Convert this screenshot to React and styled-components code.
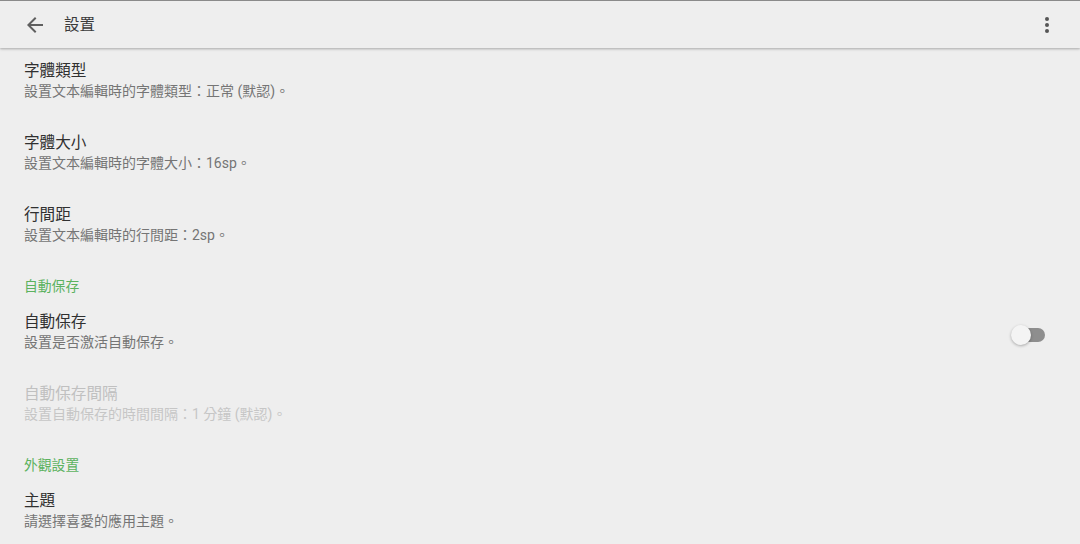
import styled, { createGlobalStyle } from 'styled-components';

const GlobalStyle = createGlobalStyle`
  html, body {
    margin: 0;
    padding: 0;
    background: #eeeeee;
  }
  body {
    font-family: Roboto, "Noto Sans CJK TC", "Noto Sans", sans-serif;
    text-spacing-trim: space-all;
  }
`;

const sections = [
  {
    items: [
      { title: '字體類型', summary: '設置文本編輯時的字體類型：正常 (默認)。' },
      { title: '字體大小', summary: '設置文本編輯時的字體大小：16sp。' },
      { title: '行間距', summary: '設置文本編輯時的行間距：2sp。' },
    ],
  },
  {
    header: '自動保存',
    items: [
      { title: '自動保存', summary: '設置是否激活自動保存。', toggle: true },
      { title: '自動保存間隔', summary: '設置自動保存的時間間隔：1 分鐘 (默認)。', disabled: true },
    ],
  },
  {
    header: '外觀設置',
    items: [{ title: '主題', summary: '請選擇喜愛的應用主題。' }],
  },
];

export default function App() {
  return (
    <Screen>
      <GlobalStyle />
      <Toolbar>
        <IconButton aria-label="back">
          <svg width="24" height="24" viewBox="0 0 24 24">
            <path
              d="M20 11H7.83l5.59-5.59L12 4l-8 8 8 8 1.41-1.41L7.83 13H20v-2z"
              fill="#5f5f5f"
            />
          </svg>
        </IconButton>
        <Title>設置</Title>
        <Spacer />
        <IconButton aria-label="more">
          <svg width="24" height="24" viewBox="0 0 24 24">
            <circle cx="12" cy="6" r="2" fill="#555" />
            <circle cx="12" cy="12" r="2" fill="#555" />
            <circle cx="12" cy="18" r="2" fill="#555" />
          </svg>
        </IconButton>
      </Toolbar>
      <List>
        {sections.map((section, i) => (
          <div key={i}>
            {section.header && <CategoryHeader>{section.header}</CategoryHeader>}
            {section.items.map((item) => (
              <Preference key={item.title}>
                <PrefText>
                  <PrefTitle $disabled={item.disabled}>{item.title}</PrefTitle>
                  <PrefSummary $disabled={item.disabled}>{item.summary}</PrefSummary>
                </PrefText>
                {item.toggle && (
                  <Switch>
                    <Track />
                    <Thumb />
                  </Switch>
                )}
              </Preference>
            ))}
          </div>
        ))}
      </List>
    </Screen>
  );
}

const Screen = styled.div`
  width: 1080px;
  height: 544px;
  overflow: hidden;
  background: #eeeeee;
  border-top: 1px solid #8a8a8a;
  box-sizing: border-box;
`;

const Toolbar = styled.div`
  position: relative;
  z-index: 1;
  display: flex;
  align-items: center;
  height: 47px;
  padding: 0 21px 0 23px;
  background: #eeeeee;
  box-shadow: 0 1px 2px rgba(0, 0, 0, 0.22), 0 2px 3px rgba(0, 0, 0, 0.06);
`;

const IconButton = styled.div`
  display: flex;
  width: 24px;
  height: 24px;
`;

const Title = styled.div`
  margin: 0 0 0 17px;
  font-size: 15.5px;
  line-height: 20px;
  color: #3a3a3a;
`;

const Spacer = styled.div`
  flex: 1;
`;

const List = styled.div`
  display: flex;
  flex-direction: column;
`;

const CategoryHeader = styled.div`
  height: 35px;
  box-sizing: border-box;
  padding: 12px 24px 0;
  line-height: 20px;
  font-size: 13.8px;
  color: #5cb25f;
`;

const Preference = styled.div`
  display: flex;
  align-items: center;
  height: 72px;
  box-sizing: border-box;
  padding: 0 35px 6px 24px;
`;

const PrefText = styled.div`
  flex: 1;
  display: flex;
  flex-direction: column;
`;

const PrefTitle = styled.div`
  font-size: 15.6px;
  line-height: 20px;
  color: ${(p) => (p.$disabled ? '#c0c0c0' : '#303030')};
`;

const PrefSummary = styled.div`
  font-size: 14px;
  line-height: 20px;
  color: ${(p) => (p.$disabled ? '#c6c6c6' : '#757575')};
`;

const Switch = styled.div`
  position: relative;
  width: 36px;
  height: 22px;
  margin-top: 6px;
`;

const Track = styled.div`
  position: absolute;
  left: 4px;
  top: 4px;
  width: 32px;
  height: 14px;
  border-radius: 7px;
  background: #8e8e8e;
`;

const Thumb = styled.div`
  position: absolute;
  left: 2px;
  top: 1px;
  width: 20px;
  height: 20px;
  border-radius: 50%;
  background: #f4f4f4;
  box-shadow: 0 1px 3px rgba(0, 0, 0, 0.3);
`;
